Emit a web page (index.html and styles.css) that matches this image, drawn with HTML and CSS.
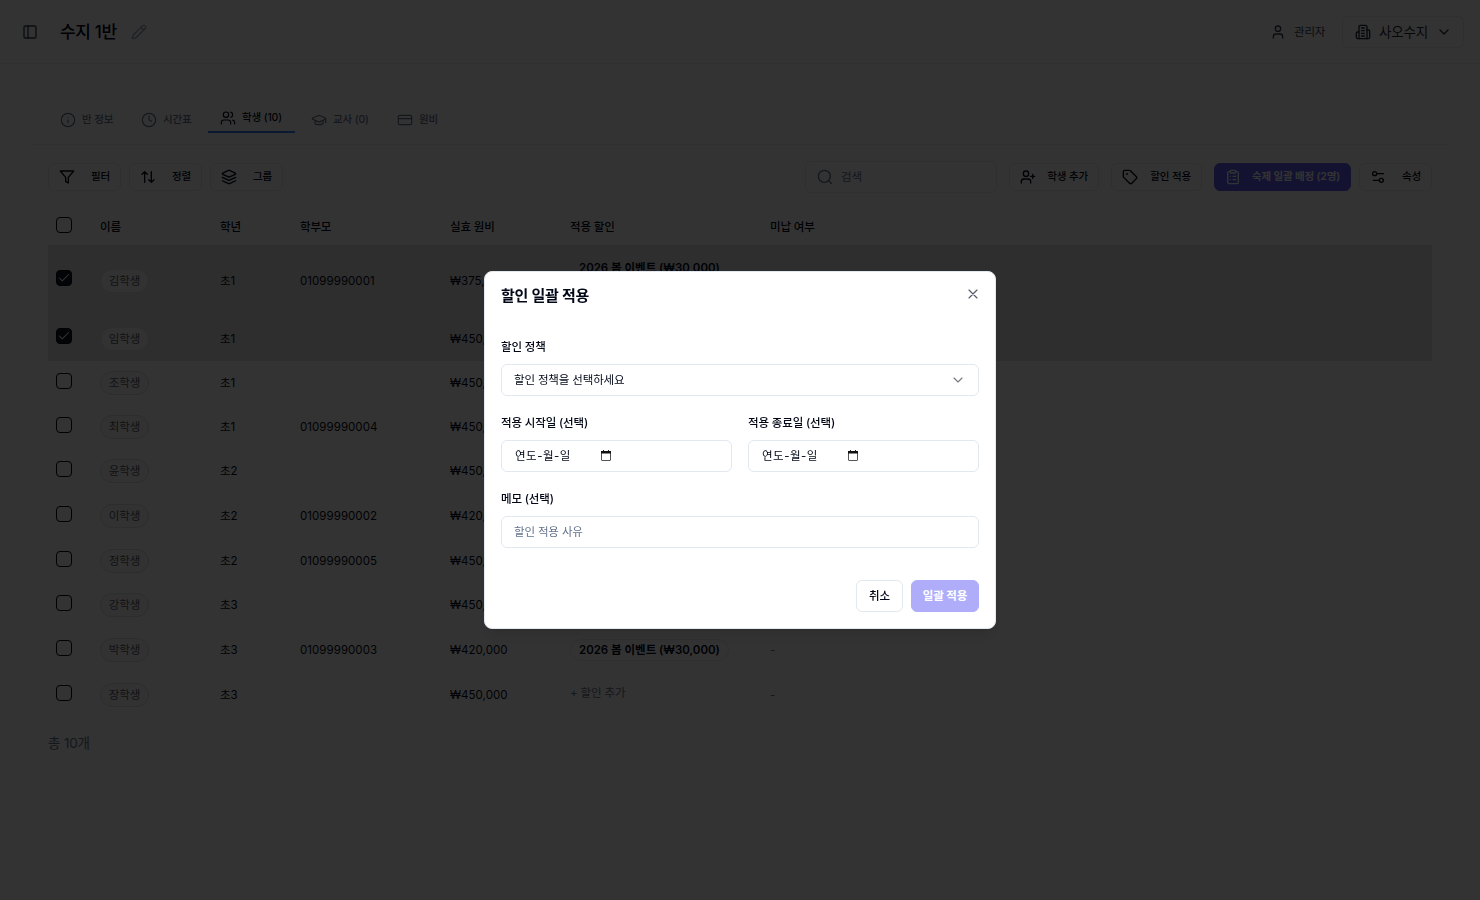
FILE: index.html
```html
<!DOCTYPE html>
<html lang="ko">

<head>
    <meta charset="UTF-8">
    <meta name="viewport" content="width=device-width, initial-scale=1.0">
    <title>수지 1반</title>
    <link rel="stylesheet" href="styles.css">
</head>

<body>
    <svg class="sprite">
        <symbol id="panel" viewBox="0 0 24 24"><rect x="3" y="3" width="18" height="18" rx="2"/><path d="M9 3v18"/></symbol>
        <symbol id="pencil" viewBox="0 0 24 24"><path d="M21.174 6.812a1 1 0 0 0-3.986-3.987L3.842 16.174a2 2 0 0 0-.5.83l-1.321 4.352a.5.5 0 0 0 .623.622l4.353-1.32a2 2 0 0 0 .83-.497z"/><path d="m15 5 4 4"/></symbol>
        <symbol id="user" viewBox="0 0 24 24"><path d="M19 21v-2a4 4 0 0 0-4-4H9a4 4 0 0 0-4 4v2"/><circle cx="12" cy="7" r="4"/></symbol>
        <symbol id="building" viewBox="0 0 24 24"><path d="M6 22V4a2 2 0 0 1 2-2h8a2 2 0 0 1 2 2v18Z"/><path d="M6 12H4a2 2 0 0 0-2 2v6a2 2 0 0 0 2 2h2"/><path d="M18 9h2a2 2 0 0 1 2 2v9a2 2 0 0 1-2 2h-2"/><path d="M10 6h4M10 10h4M10 14h4M10 18h4"/></symbol>
        <symbol id="chevron" viewBox="0 0 24 24"><path d="m6 9 6 6 6-6"/></symbol>
        <symbol id="info" viewBox="0 0 24 24"><circle cx="12" cy="12" r="10"/><path d="M12 16v-4M12 8h.01"/></symbol>
        <symbol id="clock" viewBox="0 0 24 24"><circle cx="12" cy="12" r="10"/><path d="M12 6v6l4 2"/></symbol>
        <symbol id="users" viewBox="0 0 24 24"><path d="M16 21v-2a4 4 0 0 0-4-4H6a4 4 0 0 0-4 4v2"/><circle cx="9" cy="7" r="4"/><path d="M22 21v-2a4 4 0 0 0-3-3.87M16 3.13a4 4 0 0 1 0 7.75"/></symbol>
        <symbol id="cap" viewBox="0 0 24 24"><path d="M21.42 10.922a1 1 0 0 0-.019-1.838L12.83 5.18a2 2 0 0 0-1.66 0L2.6 9.08a1 1 0 0 0 0 1.832l8.57 3.908a2 2 0 0 0 1.66 0z"/><path d="M22 10v6M6 12.5V16a6 3 0 0 0 12 0v-3.5"/></symbol>
        <symbol id="card" viewBox="0 0 24 24"><rect x="2" y="5" width="20" height="14" rx="2"/><path d="M2 10h20"/></symbol>
        <symbol id="filter" viewBox="0 0 24 24"><path d="M22 3H2l8 9.46V19l4 2v-8.54L22 3z"/></symbol>
        <symbol id="sort" viewBox="0 0 24 24"><path d="m21 16-4 4-4-4M17 20V4M3 8l4-4 4 4M7 4v16"/></symbol>
        <symbol id="layers" viewBox="0 0 24 24"><path d="m12.83 2.18a2 2 0 0 0-1.66 0L2.6 6.08a1 1 0 0 0 0 1.83l8.58 3.91a2 2 0 0 0 1.66 0l8.58-3.9a1 1 0 0 0 0-1.83Z"/><path d="m22 17.65-9.17 4.16a2 2 0 0 1-1.66 0L2 17.65"/><path d="m22 12.65-9.17 4.16a2 2 0 0 1-1.66 0L2 12.65"/></symbol>
        <symbol id="search" viewBox="0 0 24 24"><circle cx="11" cy="11" r="9"/><path d="m22 22-4.6-4.6"/></symbol>
        <symbol id="user-plus" viewBox="0 0 24 24"><path d="M16 21v-2a4 4 0 0 0-4-4H6a4 4 0 0 0-4 4v2"/><circle cx="9" cy="7" r="4"/><path d="M19 8v6M22 11h-6"/></symbol>
        <symbol id="tag" viewBox="0 0 24 24"><path d="M12.586 2.586A2 2 0 0 0 11.172 2H4a2 2 0 0 0-2 2v7.172a2 2 0 0 0 .586 1.414l8.704 8.704a2.426 2.426 0 0 0 3.42 0l6.58-6.58a2.426 2.426 0 0 0 0-3.42z"/><circle cx="7.5" cy="7.5" r=".5"/></symbol>
        <symbol id="clipboard" viewBox="0 0 24 24"><rect x="8" y="2" width="8" height="4" rx="1"/><path d="M16 4h2a2 2 0 0 1 2 2v14a2 2 0 0 1-2 2H6a2 2 0 0 1-2-2V6a2 2 0 0 1 2-2h2M12 11h4M12 16h4M8 11h.01M8 16h.01"/></symbol>
        <symbol id="settings" viewBox="0 0 24 24"><path d="M20 7h-9M14 17H5"/><circle cx="17" cy="17" r="3"/><circle cx="7" cy="7" r="3"/></symbol>
        <symbol id="check" viewBox="0 0 24 24"><path d="M20 6 9 17l-5-5"/></symbol>
        <symbol id="close" viewBox="0 0 24 24"><path d="M18 6 6 18M6 6l12 12"/></symbol>
        <symbol id="calendar" viewBox="0 0 12 12"><rect x="1.5" y="1.5" width="9" height="9" rx="0.5" stroke="#555"/><path d="M1 1h10v2.5H1z" fill="#111" stroke="none"/><path d="M3.5 0.5v1M8.5 0.5v1" stroke="#111"/></symbol>
    </svg>

    <header class="topbar">
        <svg class="icon"><use href="#panel"/></svg>
        <h1>수지 1반</h1>
        <svg class="icon edit"><use href="#pencil"/></svg>
        <div class="account">
            <svg class="icon"><use href="#user"/></svg>
            <span>관리자</span>
        </div>
        <button class="academy">
            <svg class="icon"><use href="#building"/></svg>
            <span>사오수지</span>
            <svg class="icon"><use href="#chevron"/></svg>
        </button>
    </header>

    <main>
        <nav class="tabs">
            <a class="tab tab-info"><svg class="icon"><use href="#info"/></svg><span>반 정보</span></a>
            <a class="tab tab-time"><svg class="icon"><use href="#clock"/></svg><span>시간표</span></a>
            <a class="tab tab-students active"><svg class="icon"><use href="#users"/></svg><span>학생 (10)</span></a>
            <a class="tab tab-teachers"><svg class="icon"><use href="#cap"/></svg><span>교사 (0)</span></a>
            <a class="tab"><svg class="icon"><use href="#card"/></svg><span>원비</span></a>
        </nav>

        <div class="toolbar">
            <button class="tool"><svg class="icon"><use href="#filter"/></svg><span>필터</span></button>
            <button class="tool"><svg class="icon"><use href="#sort"/></svg><span>정렬</span></button>
            <button class="tool"><svg class="icon"><use href="#layers"/></svg><span>그룹</span></button>
            <div class="actions">
                <div class="search"><svg class="icon"><use href="#search"/></svg><span>검색</span></div>
                <button class="tool add"><svg class="icon"><use href="#user-plus"/></svg><span>학생 추가</span></button>
                <button class="tool discount"><svg class="icon"><use href="#tag"/></svg><span>할인 적용</span></button>
                <button class="tool assign"><svg class="icon"><use href="#clipboard"/></svg><span>숙제 일괄 배정 (2명)</span></button>
                <button class="tool props"><svg class="icon"><use href="#settings"/></svg><span>속성</span></button>
            </div>
        </div>

        <table>
            <colgroup>
                <col class="c-check"><col class="c-name"><col class="c-grade"><col class="c-parent"><col class="c-fee"><col class="c-discount"><col>
            </colgroup>
            <thead>
                <tr><th><i class="box"></i></th><th>이름</th><th>학년</th><th>학부모</th><th>실효 원비</th><th>적용 할인</th><th>미납 여부</th></tr>
            </thead>
            <tbody>
                <tr class="selected double">
                    <td><i class="box"><svg><use href="#check"/></svg></i></td><td><span class="name">김학생</span></td><td>초1</td><td class="num">01099990001</td><td class="num">₩375,000</td>
                    <td><span class="badge">2026 봄 이벤트 (₩30,000)</span><span class="badge">형제 할인 (₩45,000)</span></td><td class="muted">-</td>
                </tr>
                <tr class="selected">
                    <td><i class="box"><svg><use href="#check"/></svg></i></td><td><span class="name">임학생</span></td><td>초1</td><td></td><td class="num">₩450,000</td><td><span class="more">+ 할인 추가</span></td><td class="muted">-</td>
                </tr>
                <tr>
                    <td><i class="box"></i></td><td><span class="name">조학생</span></td><td>초1</td><td></td><td class="num">₩450,000</td><td><span class="more">+ 할인 추가</span></td><td class="muted">-</td>
                </tr>
                <tr>
                    <td><i class="box"></i></td><td><span class="name">최학생</span></td><td>초1</td><td class="num">01099990004</td><td class="num">₩450,000</td><td><span class="more">+ 할인 추가</span></td><td class="muted">-</td>
                </tr>
                <tr>
                    <td><i class="box"></i></td><td><span class="name">윤학생</span></td><td>초2</td><td></td><td class="num">₩450,000</td><td><span class="more">+ 할인 추가</span></td><td class="muted">-</td>
                </tr>
                <tr class="tall">
                    <td><i class="box"></i></td><td><span class="name">이학생</span></td><td>초2</td><td class="num">01099990002</td><td class="num">₩420,000</td><td><span class="badge">2026 봄 이벤트 (₩30,000)</span></td><td class="muted">-</td>
                </tr>
                <tr>
                    <td><i class="box"></i></td><td><span class="name">정학생</span></td><td>초2</td><td class="num">01099990005</td><td class="num">₩450,000</td><td><span class="more">+ 할인 추가</span></td><td class="muted">-</td>
                </tr>
                <tr>
                    <td><i class="box"></i></td><td><span class="name">강학생</span></td><td>초3</td><td></td><td class="num">₩450,000</td><td><span class="more">+ 할인 추가</span></td><td class="muted">-</td>
                </tr>
                <tr class="tall">
                    <td><i class="box"></i></td><td><span class="name">박학생</span></td><td>초3</td><td class="num">01099990003</td><td class="num">₩420,000</td><td><span class="badge">2026 봄 이벤트 (₩30,000)</span></td><td class="muted">-</td>
                </tr>
                <tr>
                    <td><i class="box"></i></td><td><span class="name">장학생</span></td><td>초3</td><td></td><td class="num">₩450,000</td><td><span class="more">+ 할인 추가</span></td><td class="muted">-</td>
                </tr>
            </tbody>
        </table>
        <p class="total">총 10개</p>
    </main>

    <div class="overlay">
        <section class="modal">
            <div class="modal-head">
                <h2>할인 일괄 적용</h2>
                <svg class="icon"><use href="#close"/></svg>
            </div>
            <div class="fields">
                <div class="field wide">
                    <label>할인 정책</label>
                    <div class="control select"><span>할인 정책을 선택하세요</span><svg class="icon"><use href="#chevron"/></svg></div>
                </div>
                <div class="field">
                    <label>적용 시작일 (선택)</label>
                    <div class="control date"><span>연도-월-일</span><svg><use href="#calendar"/></svg></div>
                </div>
                <div class="field">
                    <label>적용 종료일 (선택)</label>
                    <div class="control date"><span>연도-월-일</span><svg><use href="#calendar"/></svg></div>
                </div>
                <div class="field wide">
                    <label>메모 (선택)</label>
                    <div class="control placeholder"><span>할인 적용 사유</span></div>
                </div>
            </div>
            <div class="modal-foot">
                <button class="btn cancel">취소</button>
                <button class="btn apply">일괄 적용</button>
            </div>
        </section>
    </div>
</body>

</html>
```
FILE: styles.css
```css
* {
    box-sizing: border-box;
}

body {
    margin: 0;
    height: 900px;
    overflow: hidden;
    background: #fff;
    color: #020817;
    font-family: Inter, "Noto Sans CJK KR", sans-serif;
    font-size: 11.5px;
    line-height: 16px;
    letter-spacing: -0.15px;
}

button {
    font: inherit;
    letter-spacing: inherit;
    color: inherit;
    background: #fff;
    border: 1px solid #e2e8f0;
    padding: 0;
}

span, th, td, label {
    white-space: nowrap;
}

.sprite {
    display: none;
}

.icon {
    width: 16px;
    height: 16px;
    flex-shrink: 0;
}

svg {
    fill: none;
    stroke: currentColor;
    stroke-width: 2;
    stroke-linecap: round;
    stroke-linejoin: round;
}

/* top bar */
.topbar {
    display: flex;
    align-items: center;
    height: 64px;
    padding: 0 16px 0 22px;
    border-bottom: 1px solid #e2e8f0;
}

.topbar > .icon {
    color: #334155;
}

h1 {
    margin: 0 12px 0 22px;
    width: 59px;
    font-size: 17px;
    line-height: 24px;
    font-weight: 500;
    letter-spacing: -0.35px;
    white-space: nowrap;
}

.topbar > .edit {
    color: #94a3b8;
}

.account {
    display: flex;
    align-items: center;
    gap: 8px;
    width: 72px;
    margin-left: auto;
    color: #334155;
}

.academy {
    display: flex;
    align-items: center;
    gap: 8px;
    width: 122px;
    height: 32px;
    padding: 0 12px;
    border-radius: 6px;
    font-size: 13.5px;
    color: #1e293b;
}

.academy .icon:last-child {
    margin: 0 1px 0 auto;
}

main {
    padding: 0 48px;
}

/* tabs */
.tabs {
    display: flex;
    gap: 4px;
    height: 81px;
    margin: 0 -16px;
    padding: 40px 16px 0;
    border-bottom: 1px solid #e2e8f0;
    font-size: 10.5px;
    font-weight: 500;
}

.tab {
    display: flex;
    align-items: center;
    gap: 6px;
    height: 30px;
    padding: 2px 12px 0;
    color: #64748b;
}

.tab .icon {
    stroke-width: 1.75;
}

.tab-info { width: 77px; }
.tab-time { width: 75px; }
.tab-students { width: 87px; }
.tab-teachers { width: 82px; }

.tab.active {
    height: 29px;
    padding-top: 0;
    border-bottom: 2px solid #3b82f6;
    color: #020817;
}

/* toolbar */
.toolbar {
    display: flex;
    align-items: center;
    gap: 8px;
    height: 32px;
    margin-top: 16px;
}

.tool {
    display: flex;
    align-items: center;
    justify-content: space-between;
    width: 73px;
    height: 28px;
    padding: 0 10px;
    border-radius: 6px;
    border-color: #e6eaf0;
    font-size: 10.5px;
    font-weight: 500;
}

.actions {
    display: flex;
    align-items: center;
    gap: 12px;
    margin-left: auto;
}

.search {
    display: flex;
    align-items: center;
    gap: 8px;
    width: 192px;
    height: 32px;
    padding: 0 11px;
    border: 1px solid #e2e8f0;
    border-radius: 6px;
    color: #64748b;
}

.add { width: 90px; }
.discount { width: 91px; }

.assign {
    width: 137px;
    background: #615df5;
    border-color: #615df5;
    color: #fff;
    font-weight: 600;
}

.props {
    margin-left: -4px;
}

/* students */
table {
    width: 1384px;
    margin-top: 16px;
    table-layout: fixed;
    border-collapse: collapse;
}

.c-check { width: 44px; }
.c-name { width: 120px; }
.c-grade { width: 80px; }
.c-parent { width: 150px; }
.c-fee { width: 120px; }
.c-discount { width: 200px; }

th, td {
    padding: 0 8px;
    text-align: left;
}

th {
    height: 36px;
    font-weight: 500;
}

td {
    height: 44px;
}

.tall td {
    height: 46px;
}

.double td {
    height: 72px;
}

.selected {
    background: #e6e6e8;
}

.num {
    letter-spacing: 0.05px;
}

.box {
    display: block;
    width: 16px;
    height: 16px;
    margin-bottom: 4px;
    border: 1px solid #020817;
    border-radius: 4px;
}

.selected .box {
    margin-bottom: 6px;
    background: #0f172a;
    color: #fff;
}

.box svg {
    display: block;
    width: 14px;
    height: 14px;
    stroke-width: 1.75;
}

.name {
    display: block;
    width: 49px;
    height: 24px;
    border: 1px solid #dcdee2;
    border-radius: 12px;
    background: #f8f8f9;
    color: #555b66;
    line-height: 22px;
    text-align: center;
}

.badge {
    display: block;
    width: 159px;
    height: 22px;
    padding: 0 8px;
    border: 1px solid #e2e8f0;
    border-radius: 11px;
    font-weight: 600;
    line-height: 20px;
    letter-spacing: -0.02px;
}

.badge + .badge {
    margin-top: 4px;
}

.more {
    display: block;
    margin-bottom: 4px;
    color: #64748b;
}

.muted {
    color: #64748b;
}

.total {
    margin: 18px 0 0;
    font-size: 13.5px;
    color: #64748b;
}

/* dialog */
.overlay {
    position: fixed;
    inset: 0;
    display: flex;
    align-items: center;
    justify-content: center;
    background: rgba(0, 0, 0, 0.8);
}

.modal {
    width: 512px;
    height: 358px;
    padding: 16px;
    border: 1px solid #e2e8f0;
    border-radius: 8px;
    background: #fff;
    box-shadow: 0 10px 15px -3px rgba(0, 0, 0, 0.1), 0 4px 6px -4px rgba(0, 0, 0, 0.1);
}

.modal-head {
    display: flex;
    justify-content: space-between;
    height: 16px;
}

.modal-head .icon {
    margin: -2px -2px 0 0;
    color: #555b66;
    stroke-width: 1.75;
}

h2 {
    margin: 0;
    font-size: 15px;
    line-height: 15px;
    font-weight: 600;
    letter-spacing: -0.3px;
}

.fields {
    display: grid;
    grid-template-columns: 1fr 1fr;
    gap: 18px 16px;
    margin-top: 34px;
}

.wide {
    grid-column: span 2;
}

.field label {
    display: block;
    padding-top: 1px;
    margin-bottom: 9px;
    font-weight: 500;
}

.control {
    display: flex;
    align-items: center;
    height: 32px;
    padding: 0 12px;
    border: 1px solid #e2e8f0;
    border-radius: 6px;
}

.select {
    justify-content: space-between;
}

.select .icon {
    color: #777b84;
    stroke-width: 1.75;
}

.date {
    padding-left: 13px;
}

.date span {
    width: 85px;
    letter-spacing: 0.5px;
}

.date svg {
    width: 12px;
    height: 12px;
    stroke-width: 1;
}

.placeholder {
    color: #64748b;
}

.modal-foot {
    display: flex;
    justify-content: flex-end;
    gap: 8px;
    margin-top: 32px;
}

.btn {
    height: 32px;
    border-radius: 6px;
    font-weight: 500;
}

.cancel {
    width: 47px;
}

.apply {
    width: 68px;
    background: #615df5;
    border-color: #615df5;
    color: #fff;
    font-weight: 600;
    opacity: 0.5;
}
```
